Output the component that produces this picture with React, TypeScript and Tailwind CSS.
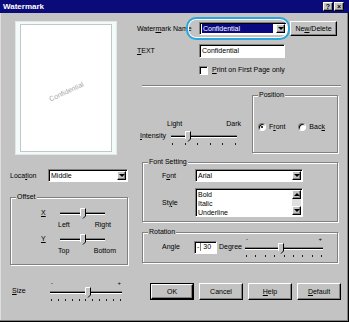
import React from 'react'

// Win9x style "Watermark" dialog

const raised =
  'bg-[#c3c3c3] border border-t-white border-l-white border-r-black border-b-black shadow-[inset_-1px_-1px_0_#808080]'
const sunken =
  'bg-white border border-t-[#808080] border-l-[#808080] border-r-white border-b-white shadow-[inset_1px_1px_0_#000]'

const U = ({ children }: { children: React.ReactNode }) => <span className="underline">{children}</span>

const ArrowBtn = ({ up }: { up?: boolean }) => (
  <span className={`${raised} w-[9px] h-[9px] flex items-center justify-center shrink-0`}>
    {up ? (
      <span className="w-0 h-0 border-l-[3px] border-r-[3px] border-b-[3px] border-transparent border-b-black" />
    ) : (
      <span className="w-0 h-0 border-l-[3px] border-r-[3px] border-t-[3px] border-transparent border-t-black" />
    )}
  </span>
)

const Dropdown = ({ value, width, selected }: { value: string; width: string; selected?: boolean }) => (
  <div className={`${sunken} ${width} h-[13px] flex items-center justify-between pl-[2px] pr-[1px]`}>
    <span className={selected ? 'bg-[#0a0a80] text-white px-[1px] flex-1 mr-[3px] leading-[9px]' : 'leading-[9px]'}>
      {value}
    </span>
    <ArrowBtn />
  </div>
)

const Thumb = ({ left }: { left: number }) => (
  <svg width="6" height="11" viewBox="0 0 6 11" className="absolute top-0" style={{ left }}>
    <polygon points="0.5,0.5 5.5,0.5 5.5,8 3,10.5 0.5,8" fill="#c3c3c3" />
    <polyline points="0.5,8 0.5,0.5 5.5,0.5" fill="none" stroke="#fff" />
    <polyline points="5.5,0.5 5.5,8 3,10.5" fill="none" stroke="#000" />
  </svg>
)

const Slider = ({
  width,
  value,
  ticks = 0,
  signs,
}: {
  width: string
  value: number
  ticks?: number
  signs?: boolean
}) => (
  <div className={`${width} flex flex-col shrink-0`}>
    {signs && (
      <div className="flex justify-between h-[6px] text-[6px] leading-[5px] px-[1px]">
        <span>-</span>
        <span>+</span>
      </div>
    )}
    <div className="relative h-[10px]">
      <div className="mt-[4px] h-[3px] bg-black border-t border-t-[#808080] border-b border-b-white" />
      <Thumb left={value} />
    </div>
    {ticks > 0 && (
      <div className="flex justify-between mt-[2px] px-[1px]">
        {Array.from({ length: ticks }).map((_, i) => (
          <span key={i} className="w-px h-[2px] bg-[#202020]" />
        ))}
      </div>
    )}
  </div>
)

const Group = ({
  title,
  className,
  children,
}: {
  title: string
  className: string
  children: React.ReactNode
}) => (
  <div
    className={`relative border border-[#808080] shadow-[inset_1px_1px_0_#fff,1px_1px_0_#fff] ${className}`}
  >
    <span className="absolute -top-[5px] left-[5px] bg-[#c3c3c3] px-[1px] leading-[8px]">{title}</span>
    {children}
  </div>
)

const Radio = ({ checked }: { checked?: boolean }) => (
  <span className="w-[8px] h-[8px] rounded-full bg-white border border-t-[#808080] border-l-[#808080] border-r-white border-b-white shadow-[inset_1px_1px_0_#000] flex items-center justify-center shrink-0">
    {checked && <span className="w-[2px] h-[2px] rounded-full bg-black" />}
  </span>
)

const Button = ({ children, def }: { children: React.ReactNode; def?: boolean }) => (
  <div
    className={`w-[44px] h-[17px] flex items-center justify-center ${
      def ? 'border border-black' : ''
    }`}
  >
    <div className={`${raised} w-full h-full flex items-center justify-center`}>{children}</div>
  </div>
)

export default function App() {
  return (
    <div className="w-[349px] h-[322px] bg-[#c3c3c3] overflow-hidden text-black text-[7px] leading-[8px] font-['Liberation_Sans',Arial,sans-serif] shadow-[inset_-1px_-1px_0_#000,inset_-2px_-2px_0_#808080,inset_1px_1px_0_#dfdfdf]">
      {/* title bar */}
      <div className="h-[13px] bg-[#0a0a78] flex items-center justify-between pl-[3px] pr-[5px]">
        <span className="text-white font-bold text-[8px]">Watermark</span>
        <div className="flex gap-px">
          <span className={`${raised} w-[10px] h-[9px] flex items-center justify-center font-bold text-[7px]`}>?</span>
          <span className={`${raised} w-[10px] h-[9px] flex items-center justify-center font-bold text-[7px]`}>×</span>
        </div>
      </div>

      <div className="flex">
        {/* LEFT SIDE */}
        <div className="ml-[10px] w-[118px] flex flex-col">
          <div className="mt-[8px] ml-[5px] w-[102px] h-[134px] bg-[#f2fafa] border border-[#e0e8e8] px-[4px] py-[2px]">
            <div className="w-full h-full bg-white border border-[#c0c8c8] flex items-center justify-center">
              <span className="-rotate-[25deg] mt-[8px] text-[#a8a8a8] text-[7px]">Confidential</span>
            </div>
          </div>

          <div className="mt-[14px] h-[13px] flex items-center">
            <span className="w-[38px]">
              Loca<U>t</U>ion
            </span>
            <Dropdown value="Middle" width="w-[80px]" />
          </div>

          <Group title="Offset" className="mt-[15px] h-[68px]">
            <div className="pt-[10px] flex items-center">
              <span className="ml-[30px] w-[19px]">
                <U>X</U>
              </span>
              <Slider width="w-[45px]" value={20} />
            </div>
            <div className="mt-[3px] ml-[47px] w-[53px] flex justify-between">
              <span>Left</span>
              <span>Right</span>
            </div>
            <div className="mt-[5px] flex items-center">
              <span className="ml-[30px] w-[19px]">
                <U>Y</U>
              </span>
              <Slider width="w-[45px]" value={20} />
            </div>
            <div className="mt-[3px] ml-[47px] w-[58px] flex justify-between">
              <span>Top</span>
              <span>Bottom</span>
            </div>
          </Group>

          <div className="mt-[16px] flex items-center">
            <span className="ml-[2px] w-[38px]">
              <U>S</U>ize
            </span>
            <Slider width="w-[72px]" value={35} ticks={11} signs />
          </div>
        </div>

        {/* RIGHT SIDE */}
        <div className="ml-[9px] w-[204px] flex flex-col">
          <div className="relative mt-[8px] h-[15px] flex items-center">
            <span className="w-[62px]">
              Water<U>m</U>ark Name
            </span>
            <Dropdown value="Confidential" width="w-[88px]" selected />
            <div className={`${raised} ml-[3px] w-[47px] h-[15px] flex items-center justify-center`}>
              Ne<U>w</U>/Delete
            </div>
            <div className="absolute left-[49px] -top-[4px] w-[104px] h-[23px] rounded-[10px] border-2 border-[#2aa6de] shadow-[inset_0_0_0_1px_#fff]" />
          </div>

          <div className="mt-[8px] h-[14px] flex items-center">
            <span className="w-[62px]">
              <U>T</U>EXT
            </span>
            <div className={`${sunken} w-[86px] h-[14px] flex items-center pl-[2px]`}>Confidential</div>
          </div>

          <div className="mt-[7px] h-[10px] flex items-center pl-[62px] gap-[4px]">
            <span className={`${sunken} w-[9px] h-[9px]`} />
            <span>
              <U>P</U>rint on First Page only
            </span>
          </div>

          <div className="mt-[10px] ml-[5px] w-[199px] h-[2px] border-t border-t-[#808080] border-b border-b-white" />

          <div className="mt-[8px] flex">
            <div className="w-[115px] flex flex-col">
              <div className="mt-[25px] flex">
                <span className="ml-[30px]">Light</span>
                <span className="ml-auto mr-[11px]">Dark</span>
              </div>
              <div className="mt-[3px] flex items-start">
                <span className="ml-[3px] w-[31px] mt-[1px]">
                  <U>I</U>ntensity
                </span>
                <Slider width="w-[66px]" value={14} ticks={6} />
              </div>
            </div>
            <Group title="Position" className="w-[86px] h-[58px]">
              <div className="pt-[27px] flex items-center">
                <span className="ml-[5px]">
                  <Radio checked />
                </span>
                <span className="ml-[3px]">
                  F<U>r</U>ont
                </span>
                <span className="ml-[13px]">
                  <Radio />
                </span>
                <span className="ml-[3px]">
                  Bac<U>k</U>
                </span>
              </div>
            </Group>
          </div>

          <Group title="Font Setting" className="mt-[9px] ml-[5px] w-[196px] h-[60px]">
            <div className="pt-[6px] flex items-center">
              <span className="ml-[19px] w-[33px]">
                F<U>o</U>nt
              </span>
              <Dropdown value="Arial" width="w-[108px]" />
            </div>
            <div className="mt-[6px] flex items-center">
              <span className="ml-[19px] w-[33px]">
                St<U>y</U>le
              </span>
              <div className={`${sunken} w-[108px] h-[29px] flex pl-[2px] pr-[1px] py-[1px]`}>
                <div className="flex-1 flex flex-col leading-[9px]">
                  <span>Bold</span>
                  <span>Italic</span>
                  <span>Underline</span>
                </div>
                <div className="w-[9px] flex flex-col justify-between bg-[#e0e0e0]">
                  <ArrowBtn up />
                  <ArrowBtn />
                </div>
              </div>
            </div>
          </Group>

          <Group title="Rotation" className="mt-[10px] ml-[5px] w-[196px] h-[31px]">
            <div className="pt-[4px] flex items-center">
              <span className="ml-[19px] w-[32px]">Angle</span>
              <div className={`${sunken} w-[23px] h-[13px] flex items-center pl-[2px]`}>
                <span className="border-r border-[#808080] pr-[1px] mr-[2px]">-</span>
                <span>30</span>
              </div>
              <span className="ml-[2px] w-[26px]">Degree</span>
              <Slider width="w-[78px]" value={33} ticks={9} signs />
            </div>
          </Group>

          <div className="mt-[20px] ml-[13px] flex gap-[5px]">
            <Button def>OK</Button>
            <Button>Cancel</Button>
            <Button>
              <U>H</U>elp
            </Button>
            <Button>
              <U>D</U>efault
            </Button>
          </div>
        </div>
      </div>
    </div>
  )
}
